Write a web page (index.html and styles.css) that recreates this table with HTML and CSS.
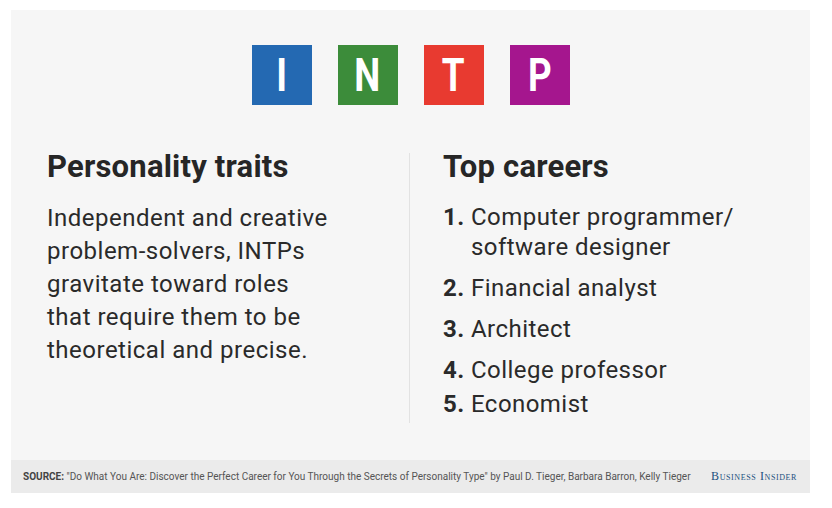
FILE: index.html
```html
<!DOCTYPE html>
<html lang="en">
<head>
<meta charset="utf-8">
<title>INTP</title>
<link rel="stylesheet" href="styles.css">
</head>
<body>
<div class="card">
  <div class="tiles">
    <div class="tile tile-i"><span class="letter">I</span></div>
    <div class="tile tile-n"><span class="letter">N</span></div>
    <div class="tile tile-t"><span class="letter">T</span></div>
    <div class="tile tile-p"><span class="letter">P</span></div>
  </div>
  <div class="columns">
    <div class="col col-left">
      <h2 class="heading">Personality traits</h2>
      <p class="body">Independent and creative<br>problem-solvers, INTPs<br>gravitate toward roles<br>that require them to be<br>theoretical and precise.</p>
    </div>
    <div class="divider"></div>
    <div class="col col-right">
      <h2 class="heading">Top careers</h2>
      <ol class="careers">
        <li class="career"><span class="num">1.</span><span class="name">Computer programmer/<br>software designer</span></li>
        <li class="career"><span class="num">2.</span><span class="name">Financial analyst</span></li>
        <li class="career"><span class="num">3.</span><span class="name">Architect</span></li>
        <li class="career"><span class="num">4.</span><span class="name">College professor</span></li>
        <li class="career career-tight"><span class="num">5.</span><span class="name">Economist</span></li>
      </ol>
    </div>
  </div>
  <div class="footer">
    <p class="source"><b class="source-label">SOURCE:</b> "Do What You Are: Discover the Perfect Career for You Through the Secrets of Personality Type" by Paul D. Tieger, Barbara Barron, Kelly Tieger</p>
    <span class="brand">Business Insider</span>
  </div>
</div>
</body>
</html>
```

FILE: styles.css
```css
html, body {
  margin: 0;
  padding: 0;
  background: #ffffff;
}

body {
  font-family: Roboto, "Noto Sans", sans-serif;
  color: #262626;
}

.card {
  margin: 10px 0 0 11px;
  width: 799px;
  height: 483px;
  background: #f6f6f6;
  display: flex;
  flex-direction: column;
}

.tiles {
  display: flex;
  justify-content: center;
  gap: 26px;
  margin-top: 35px;
}

.tile {
  width: 60px;
  height: 60px;
  display: flex;
  align-items: center;
  justify-content: center;
}

.tile-i { background: #2469b2; }
.tile-n { background: #3c8c3a; }
.tile-t { background: #e83a30; }
.tile-p { background: #a5168e; }

.letter {
  display: inline-block;
  color: #ffffff;
  font-family: Roboto, sans-serif;
  font-weight: 700;
  font-size: 46px;
  line-height: 1;
  transform: scaleX(0.8);
}

.columns {
  display: flex;
  margin-top: 44px;
  flex: 1;
}

.col-left {
  width: 362px;
  padding-left: 36px;
}

.divider {
  width: 1px;
  background: #e2e2e2;
  margin-top: 4px;
  height: 270px;
}

.col-right {
  padding-left: 33px;
}

.heading {
  margin: 0;
  font-size: 31px;
  line-height: 36px;
  font-weight: 700;
  color: #262626;
  letter-spacing: 0.2px;
}

.body {
  margin: 17px 0 0;
  font-size: 24px;
  line-height: 33px;
  font-weight: 400;
  letter-spacing: 0.5px;
  color: #2a2a2a;
}

.careers {
  list-style: none;
  margin: 17px 0 0;
  padding: 0;
}

.career {
  display: flex;
  font-size: 24px;
  line-height: 30px;
  letter-spacing: 0.45px;
  margin-bottom: 11px;
  color: #2a2a2a;
}

.career-tight {
  margin-top: -7px;
}

.num {
  font-weight: 700;
  width: 28px;
  flex: none;
}

.footer {
  height: 33px;
  background: #ebebeb;
  display: flex;
  align-items: center;
  justify-content: space-between;
  padding: 0 13px 0 12px;
}

.source {
  margin: 0;
  font-family: Roboto, sans-serif;
  font-size: 10px;
  color: #555555;
  white-space: nowrap;
}

.source-label {
  font-weight: 700;
  color: #444444;
}

.brand {
  font-family: "Liberation Serif", serif;
  font-variant: small-caps;
  font-size: 12px;
  letter-spacing: 0.6px;
  color: #22507e;
  white-space: nowrap;
}
```
